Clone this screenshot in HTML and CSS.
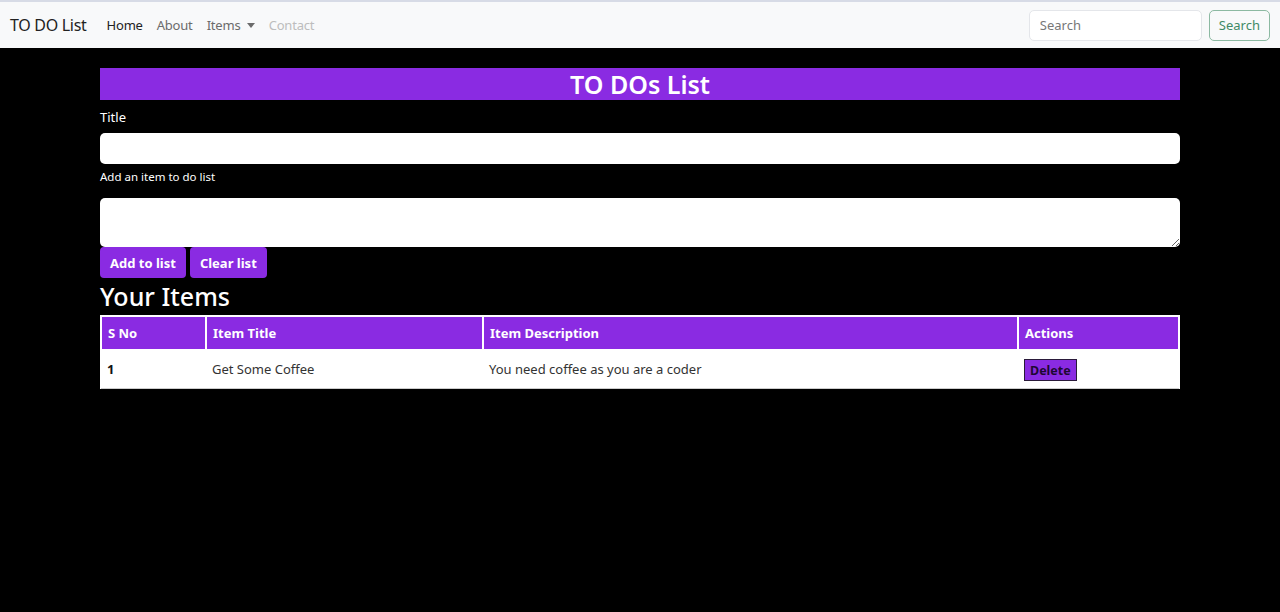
FILE: index.html
```html
<!DOCTYPE html>
<html>
<head>
<meta charset="utf-8">
<link rel="stylesheet" href="styles.css">
</head>
<body>
<nav class="navbar">
  <a class="brand">TO DO List</a>
  <ul class="nav">
    <li class="active">Home</li>
    <li>About</li>
    <li class="dropdown">Items <span class="caret"></span></li>
    <li class="disabled">Contact</li>
  </ul>
  <form class="search">
    <input class="search-input" placeholder="Search">
    <button type="button" class="search-btn">Search</button>
  </form>
</nav>
<main class="container">
  <h1 class="banner">TO DOs List</h1>
  <label class="label">Title</label>
  <input class="field">
  <div class="help">Add an item to do list</div>
  <textarea class="area"></textarea>
  <div class="actions">
    <button class="btn">Add to list</button>
    <button class="btn">Clear list</button>
  </div>
  <h2 class="items-title">Your Items</h2>
  <table class="table">
    <thead>
      <tr>
        <th class="c1">S No</th>
        <th class="c2">Item Title</th>
        <th class="c3">Item Description</th>
        <th class="c4">Actions</th>
      </tr>
    </thead>
    <tbody>
      <tr>
        <th>1</th>
        <td>Get Some Coffee</td>
        <td>You need coffee as you are a coder</td>
        <td><button class="del">Delete</button></td>
      </tr>
    </tbody>
  </table>
</main>
</body>
</html>
```
FILE: styles.css
```css
* { box-sizing: border-box; }
html, body { margin: 0; padding: 0; }
body {
  background: #000;
  font-family: "Noto Sans", "Open Sans", sans-serif;
  color: #fff;
  height: 612px;
}
.navbar {
  display: flex;
  align-items: center;
  height: 48px;
  background: #f8f9fa;
  border-top: 2px solid #d7dbe6;
  padding: 0 10px;
}
.brand {
  font-size: 16px;
  color: #222;
  margin-right: 20px;
  letter-spacing: -0.3px;
}
.nav {
  display: flex;
  list-style: none;
  margin: 0;
  padding: 0;
  gap: 14px;
  font-size: 13px;
  letter-spacing: -0.2px;
  color: #6b6b6b;
}
.nav .active { color: #222; }
.nav .disabled { color: #bdbdbd; }
.caret {
  display: inline-block;
  width: 0; height: 0;
  border-left: 4px solid transparent;
  border-right: 4px solid transparent;
  border-top: 5px solid #6b6b6b;
  vertical-align: 2px;
  margin-left: 3px;
}
.search {
  margin-left: auto;
  display: flex;
  gap: 7px;
  align-items: center;
}
.search-input {
  width: 173px;
  height: 31px;
  border: 1px solid #e4e6ea;
  border-radius: 5px;
  padding: 0 10px;
  font-family: inherit;
  font-size: 13px;
  background: #fff;
}
.search-input::placeholder { color: #777; }
.search-btn {
  height: 31px;
  padding: 0 9px;
  border: 1px solid #8cb9a2;
  border-radius: 5px;
  background: transparent;
  color: #3f8a66;
  font-family: inherit;
  font-size: 13px;
}
.container {
  width: 1080px;
  margin: 20px auto 0;
  display: flex;
  flex-direction: column;
  align-items: stretch;
}
.banner {
  margin: 0;
  height: 32px;
  background: #8a2be2;
  color: #fff;
  text-align: center;
  font-size: 25px;
  font-weight: 600;
  line-height: 33px;
}
.label {
  font-size: 13px;
  margin-top: 9px;
  height: 16px;
  line-height: 16px;
}
.field {
  margin-top: 8px;
  height: 31px;
  border: none;
  border-radius: 5px;
  background: #fff;
}
.help {
  font-size: 11.5px;
  margin-top: 6px;
  line-height: 14px;
}
.area {
  margin-top: 14px;
  height: 49px;
  border: none;
  border-radius: 5px;
  background: #fff;
  resize: vertical;
}
.actions {
  display: flex;
  gap: 4px;
}
.btn {
  height: 31px;
  padding: 0 10px;
  background: #8a2be2;
  color: #fff;
  border: none;
  border-radius: 4px;
  font-family: inherit;
  font-size: 13px;
  font-weight: 700;
}
.items-title {
  margin: 3px 0 0;
  font-size: 25px;
  font-weight: 500;
  line-height: 30px;
}
.table {
  margin-top: 4px;
  width: 1080px;
  border-collapse: collapse;
  background: #fff;
  font-size: 13px;
}
.table thead th {
  background: #8a2be2;
  color: #fff;
  text-align: left;
  font-weight: 700;
  height: 34px;
  padding: 0 6px;
  border: 2px solid #fff;
}
.c1 { width: 105px; }
.c2 { width: 277px; }
.c3 { width: 535px; }
.table tbody th, .table tbody td {
  color: #333;
  text-align: left;
  height: 38px;
  padding: 0 6px;
  border-bottom: 1px solid #ccc;
}
.table tbody th { font-weight: 700; color: #111; }
.del {
  background: #8a2be2;
  color: #1e0833;
  border: 1px solid #2a1a3a;
  font-family: inherit;
  font-weight: 700;
  font-size: 12.5px;
  height: 22px;
  padding: 0 5px;
  margin-top: 2px;
}
```
